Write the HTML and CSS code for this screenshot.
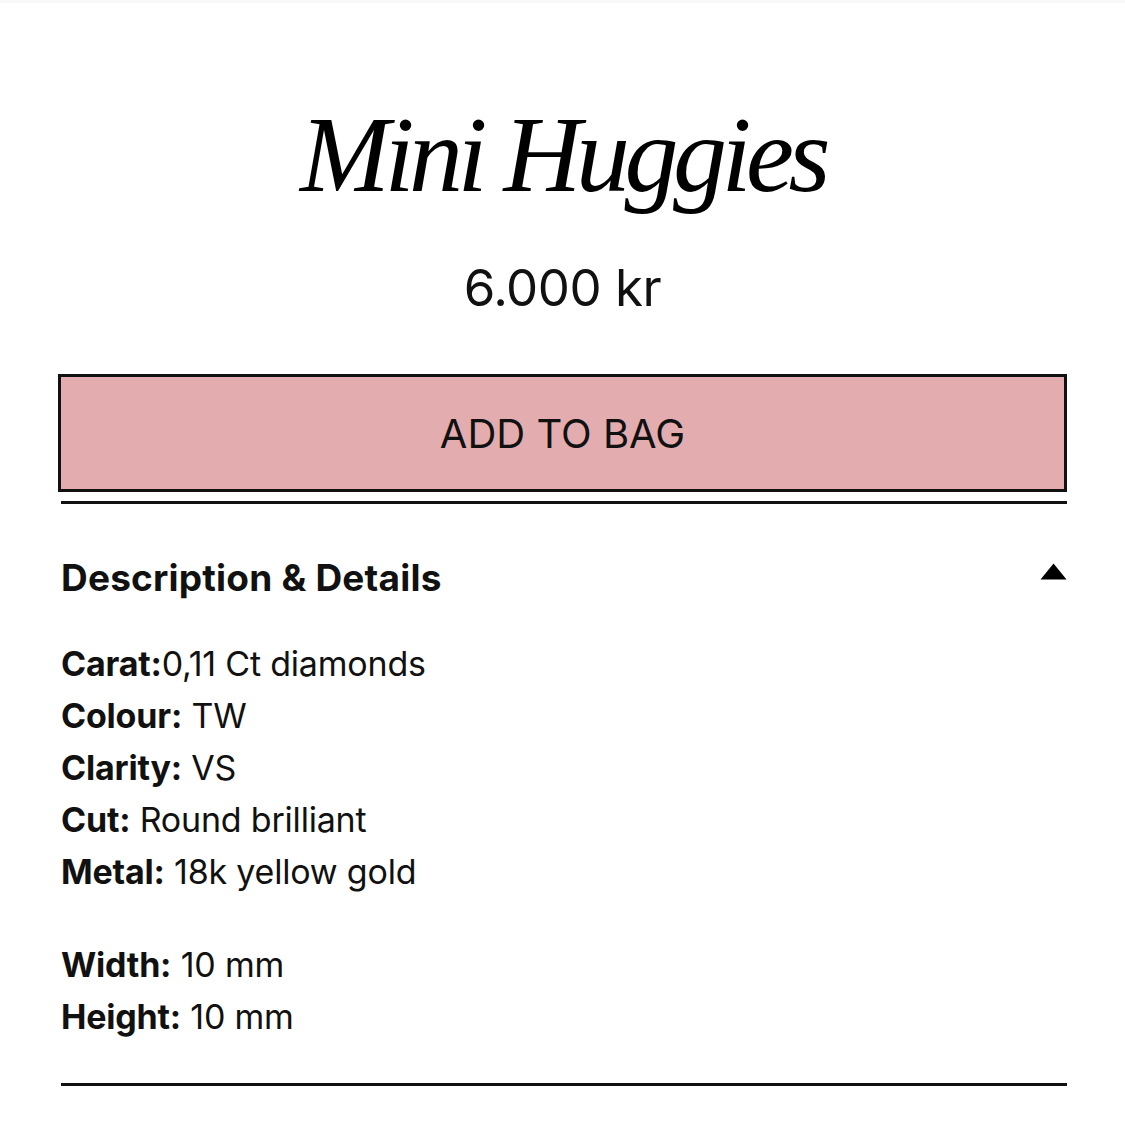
FILE: index.html
```html
<!DOCTYPE html>
<html>
<head>
<meta charset="utf-8">
<link rel="stylesheet" href="styles.css">
</head>
<body>
<div class="topbar"></div>
<main class="product">
  <h1 class="title">Mini Huggies</h1>
  <div class="price">6.000 kr</div>
  <button class="add-btn">ADD TO BAG</button>
  <section class="details">
    <div class="details-head">
      <h2 class="details-title">Description &amp; Details</h2>
      <svg class="caret" width="27" height="17" viewBox="0 0 27 17"><path d="M13.5 0.5 L26.5 16.5 L0.5 16.5 Z" fill="#000"/></svg>
    </div>
    <div class="spec-group">
      <p class="spec"><b>Carat:</b>0,11 Ct diamonds</p>
      <p class="spec"><b>Colour:</b> TW</p>
      <p class="spec"><b>Clarity:</b> VS</p>
      <p class="spec"><b>Cut:</b> Round brilliant</p>
      <p class="spec"><b>Metal:</b> 18k yellow gold</p>
    </div>
    <div class="spec-group">
      <p class="spec"><b>Width:</b> 10 mm</p>
      <p class="spec"><b>Height:</b> 10 mm</p>
    </div>
  </section>
</main>
</body>
</html>
```
FILE: styles.css
```css
html, body {
  margin: 0;
  padding: 0;
  background: #fff;
}
body {
  font-family: Inter, "Noto Sans", sans-serif;
  color: #111;
}
.topbar {
  height: 3px;
  background: #f8f8f8;
}
.product {
  padding: 0 58px 0 58px;
  display: flex;
  flex-direction: column;
}
.title {
  margin: 0;
  padding-top: 92px;
  text-align: center;
  font-family: "Liberation Serif", "DejaVu Serif", serif;
  font-style: italic;
  font-weight: 400;
  font-size: 108px;
  line-height: 120px;
  letter-spacing: -5.5px;
  color: #000;
}
.price {
  margin-top: 43px;
  text-align: center;
  font-size: 51px;
  line-height: 60px;
  letter-spacing: -0.5px;
  color: #111;
}
.add-btn {
  margin-top: 56px;
  height: 118px;
  width: 100%;
  border: 3px solid #111;
  background: #e3adb0;
  font-family: Inter, "Noto Sans", sans-serif;
  font-size: 40px;
  letter-spacing: 0;
  color: #111;
  padding: 0;
}
.details {
  margin-top: 9px;
  margin-left: 3px;
  border-top: 3px solid #111;
  border-bottom: 3px solid #111;
  padding-bottom: 40px;
}
.details-head {
  display: flex;
  justify-content: space-between;
  align-items: center;
  padding-top: 12px;
  height: 122px;
}
.details-title {
  margin: 0;
  font-size: 37px;
  font-weight: 700;
  letter-spacing: 0.2px;
  color: #111;
}
.caret {
  display: block;
  margin-top: -11px;
}
.spec-group {
  margin-bottom: 41px;
}
.spec-group:last-child {
  margin-bottom: 0;
}
.spec {
  margin: 0;
  font-size: 34px;
  line-height: 52px;
  letter-spacing: -0.2px;
  color: #111;
}
.spec b {
  font-weight: 700;
}
```
